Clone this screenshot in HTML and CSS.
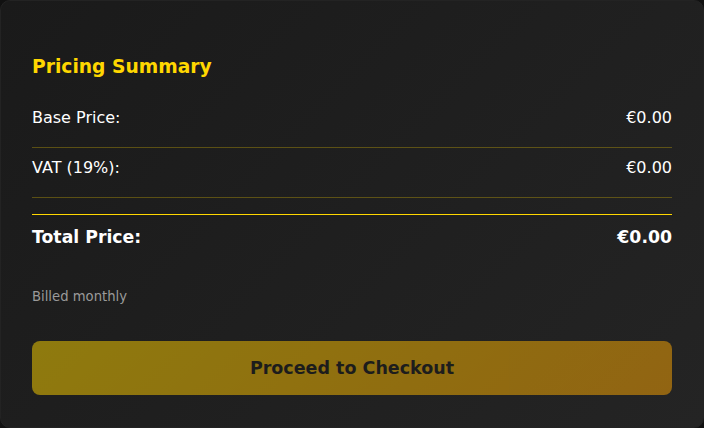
FILE: index.html
```html
<!DOCTYPE html>
<html lang="en">
<head>
<meta charset="utf-8">
<title>Pricing Summary</title>
<link rel="stylesheet" href="styles.css">
</head>
<body>
<div class="card">
  <h3 class="title">Pricing Summary</h3>
  <div class="row">
    <span>Base Price:</span>
    <span>€0.00</span>
  </div>
  <div class="row">
    <span>VAT (19%):</span>
    <span>€0.00</span>
  </div>
  <div class="total">
    <span>Total Price:</span>
    <span>€0.00</span>
  </div>
  <p class="note">Billed monthly</p>
  <button class="checkout" disabled>Proceed to Checkout</button>
</div>
</body>
</html>
```
FILE: styles.css
```css
* { box-sizing: border-box; }
html, body {
  margin: 0;
  padding: 0;
  background: #111111;
}
body {
  font-family: "DejaVu Sans", "Liberation Sans", sans-serif;
  color: #ffffff;
}
.card {
  width: 704px;
  height: 428px;
  background: linear-gradient(135deg, #1a1a1a 0%, #242424 100%);
  border: 1px solid #232323;
  border-radius: 10px;
  padding: 32px 31px 0 31px;
  display: flex;
  flex-direction: column;
}
.title {
  margin: 22px 0 19px 0;
  font-size: 18.7px;
  line-height: 24px;
  font-weight: bold;
  color: #FFD700;
}
.row {
  display: flex;
  justify-content: space-between;
  padding: 10px 0 19px 0;
  font-size: 16px;
  line-height: 20px;
  border-bottom: 1px solid rgba(255, 215, 0, 0.28);
}
.total {
  display: flex;
  justify-content: space-between;
  margin-top: 16px;
  border-top: 1px solid #FFD700;
  padding: 10px 0 10px 0;
  font-size: 17.3px;
  line-height: 24px;
  font-weight: bold;
}
.note {
  margin: 28px 0 0 0;
  font-size: 13.2px;
  line-height: 20px;
  color: #9a9a9a;
}
.checkout {
  margin-top: 34px;
  height: 54px;
  width: 100%;
  border: none;
  border-radius: 8px;
  background: linear-gradient(135deg, #FFD700, #FFA500);
  opacity: 0.5;
  color: #1a1a1a;
  font-family: "DejaVu Sans", "Liberation Sans", sans-serif;
  font-size: 17.5px;
  font-weight: bold;
  cursor: not-allowed;
}
```
